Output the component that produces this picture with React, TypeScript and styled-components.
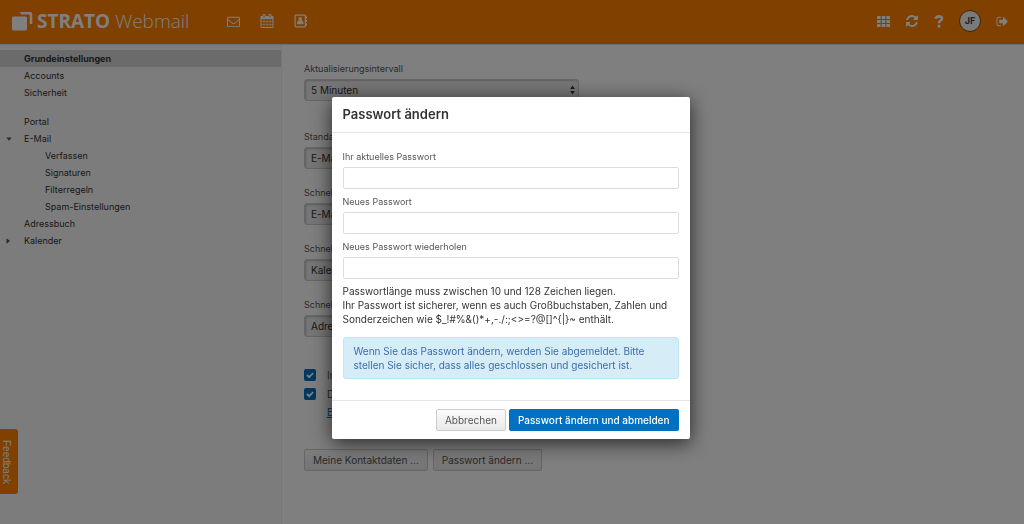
import React from "react";
import styled, { createGlobalStyle, css } from "styled-components";

const GlobalStyle = createGlobalStyle`
  *, *::before, *::after { box-sizing: border-box; }
  html, body { margin: 0; padding: 0; }
  body {
    font-family: Inter, "Liberation Sans", sans-serif;
    font-size: 10px;
    line-height: 14px;
    color: #333;
    background: #fff;
    overflow: hidden;
  }
  button, input, select { font: inherit; color: inherit; margin: 0; }
`;

const Page = styled.div`
  display: flex;
  flex-direction: column;
  height: 100vh;
`;

const Header = styled.header`
  display: flex;
  align-items: center;
  flex: none;
  height: 44px;
  padding: 0 15px 2px 12px;
  background: #ff8000;
  color: #fff;
`;

const Brand = styled.a`
  display: flex;
  align-items: center;
  gap: 4px;
  width: 215px;
  color: inherit;
  text-decoration: none;
  white-space: nowrap;
  font-family: "Open Sans", "Noto Sans", sans-serif;
  font-size: 19px;
  line-height: 24px;
`;

const BrandName = styled.strong`
  font-weight: 700;
`;

const BrandProduct = styled.span`
  font-weight: 300;
`;

const Toolbar = styled.nav<{ $gap: number; $end?: boolean }>`
  display: flex;
  align-items: center;
  gap: ${(p) => p.$gap}px;
  margin-left: ${(p) => (p.$end ? "auto" : "0")};
`;

const IconButton = styled.button`
  display: flex;
  align-items: center;
  justify-content: center;
  padding: 0;
  border: 0;
  background: none;
  color: #fff;
`;

const Avatar = styled.button`
  width: 22px;
  height: 22px;
  padding: 0;
  border: 1px solid #8a4a08;
  border-radius: 50%;
  background: #f4f4f4;
  color: #444;
  font-size: 9px;
  font-weight: 700;
  line-height: 20px;
  text-align: center;
`;

const Main = styled.div`
  display: flex;
  flex: 1;
  min-height: 0;
  border-top: 1px solid #ddd;
`;

const Sidebar = styled.nav`
  flex: none;
  width: 282px;
  padding-top: 5px;
  background: #f8f8f8;
  border-right: 1px solid #eee;
`;

const MenuList = styled.ul`
  margin: 0 0 12px;
  padding: 0;
  list-style: none;
`;

const MenuItem = styled.li<{ $active?: boolean }>`
  display: flex;
  align-items: center;
  height: 17px;
  background: ${(p) => (p.$active ? "#d6d6d6" : "transparent")};
  font-weight: ${(p) => (p.$active ? 700 : 400)};
`;

const MenuToggle = styled.span`
  display: flex;
  width: 24px;
  padding-left: 6px;
  color: #555;
`;

const MenuLink = styled.a<{ $nested?: boolean }>`
  padding-left: ${(p) => (p.$nested ? 21 : 0)}px;
  color: #333;
  font-size: 9px;
  text-decoration: none;
`;

const Content = styled.main`
  flex: 1;
  padding: 18px 22px;
  color: #555;
`;

const Field = styled.div<{ $gap: number }>`
  display: flex;
  flex-direction: column;
  gap: 4px;
  max-width: 275px;
  margin-bottom: ${(p) => p.$gap}px;
`;

const Label = styled.label`
  color: #555;
  font-size: 9px;
  line-height: 12px;
`;

const SelectWrap = styled.div`
  display: grid;
  align-items: center;
  color: #333;

  & > * { grid-area: 1 / 1; }
  & > svg { justify-self: end; margin-right: 4px; pointer-events: none; }
`;

const Select = styled.select`
  appearance: none;
  width: 100%;
  height: 22px;
  padding: 0 6px;
  border: 1px solid #ccc;
  border-radius: 3px;
  background: #ececec;
  box-shadow: inset 1px 1px 2px rgba(0, 0, 0, 0.2);
`;

const CheckRow = styled.div`
  display: flex;
  align-items: center;
  gap: 11px;
  height: 19px;
`;

const Checkbox = styled.input`
  appearance: none;
  width: 12px;
  height: 12px;
  border-radius: 2px;
  background: #0070c0
    url("data:image/svg+xml,%3Csvg xmlns='http://www.w3.org/2000/svg' viewBox='0 0 12 12'%3E%3Cpath d='M3 6l2.200 2.200L9.200 4' fill='none' stroke='white' stroke-width='1.800'/%3E%3C/svg%3E")
    center / 12px 12px;
`;

const HelpLink = styled.a`
  display: inline-block;
  margin: 2px 0 30px 23px;
  color: #0070c0;
`;

const ButtonRow = styled.div<{ $gap: number; $end?: boolean }>`
  display: flex;
  justify-content: ${(p) => (p.$end ? "flex-end" : "flex-start")};
  gap: ${(p) => p.$gap}px;
`;

const Button = styled.button<{ $primary?: boolean }>`
  height: 22px;
  padding: 0 8px;
  border: 1px solid #ccc;
  border-radius: 2px;
  background: linear-gradient(#fbfbfb, #e9e9e9);
  color: #555;
  line-height: 20px;
  white-space: nowrap;

  ${(p) =>
    p.$primary &&
    css`
      border-color: #0070c0;
      background: #0070c0;
      color: #fff;
      font-weight: 500;
    `}
`;

const Feedback = styled.button`
  position: fixed;
  left: 0;
  bottom: 30px;
  width: 18px;
  height: 65px;
  padding: 0 6px 0 0;
  border: 0;
  border-radius: 0 3px 3px 0;
  background: #ff8000;
  color: #fff;
  font-family: "Liberation Sans", sans-serif;
  font-size: 10px;
  line-height: 12px;
  writing-mode: vertical-rl;
`;

const Backdrop = styled.div`
  position: fixed;
  inset: 0;
  display: flex;
  justify-content: center;
  align-items: flex-start;
  padding: 97px 3px 0 0;
  background: rgba(0, 0, 0, 0.5);
`;

const Dialog = styled.form`
  width: 358px;
  border-radius: 2px;
  background: #fff;
  box-shadow: 0 4px 20px rgba(0, 0, 0, 0.7);
`;

const DialogHeader = styled.header`
  padding: 9px 11px;
  border-bottom: 1px solid #e5e5e5;
`;

const DialogTitle = styled.h1`
  margin: 0;
  font-size: 13px;
  font-weight: 600;
  line-height: 17px;
`;

const DialogBody = styled.div`
  padding: 18px 11px 21px;
`;

const PasswordList = styled.div`
  display: grid;
  gap: 7px;
`;

const PasswordField = styled.div`
  display: flex;
  flex-direction: column;
  gap: 4px;
`;

const TextInput = styled.input`
  width: 100%;
  height: 22px;
  padding: 0 6px;
  border: 1px solid #ddd;
  border-radius: 2px;
  background: #fff;
`;

const Hint = styled.p`
  margin: 5px 0 11px;
`;

const Notice = styled.p`
  margin: 0;
  padding: 6px 10px;
  border: 1px solid #bce8f1;
  border-radius: 3px;
  background: #d6edf8;
  color: #3a6ea8;
`;

const DialogFooter = styled.footer`
  padding: 8px 11px;
  border-top: 1px solid #e5e5e5;
`;

const Logo = () => (
  <svg width="21" height="19" viewBox="0 0 21 19" fill="currentColor" aria-hidden="true">
    <rect x="0" y="4.500" width="15" height="14" rx="1.500" />
    <path d="M7.500 0H18.300a2 2 0 0 1 2 2V12H17.700V3.800a1.200 1.200 0 0 0-1.200-1.200H9.200z" />
  </svg>
);

const MailIcon = () => (
  <svg width="13" height="13" viewBox="0 0 1792 1792" fill="currentColor">
    <path d="M1664 1504v-768q-32 36-69 66-268 206-426 338-51 43-83 67t-86.500 48.500-102.500 24.500h-2q-48 0-102.500-24.500t-86.500-48.500-83-67q-158-132-426-338-37-30-69-66v768q0 13 9.500 22.500t22.500 9.500h1472q13 0 22.500-9.500t9.500-22.500zm0-1051v-24.500l-.5-13-3-12.500-5.500-9-9-7.500-14-2.500h-1472q-13 0-22.500 9.500t-9.500 22.500q0 168 147 284 193 152 401 317 6 5 35 29.500t46 37.500 44.500 31.500 50.500 27.500 43 9h2q20 0 43-9t50.500-27.500 44.500-31.500 46-37.500 35-29.500q208-165 401-317 54-43 100.500-115.500t46.500-131.500zm128-37v1088q0 66-47 113t-113 47h-1472q-66 0-113-47t-47-113v-1088q0-66 47-113t113-47h1472q66 0 113 47t47 113z" />
  </svg>
);

const CalendarIcon = () => (
  <svg width="14" height="14" viewBox="0 0 1792 1792" fill="currentColor">
    <path d="M192 1664h288v-288h-288v288zm352 0h320v-288h-320v288zm-352-352h288v-320h-288v320zm352 0h320v-320h-320v320zm-352-384h288v-288h-288v288zm736 736h320v-288h-320v288zm-384-736h320v-288h-320v288zm768 736h288v-288h-288v288zm-384-352h320v-320h-320v320zm-352-864v-288q0-13-9.500-22.500t-22.500-9.500h-64q-13 0-22.500 9.500t-9.500 22.500v288q0 13 9.500 22.500t22.500 9.500h64q13 0 22.500-9.500t9.500-22.500zm736 864h288v-320h-288v320zm-384-384h320v-288h-320v288zm384 0h288v-288h-288v288zm32-480v-288q0-13-9.500-22.500t-22.500-9.500h-64q-13 0-22.500 9.500t-9.500 22.500v288q0 13 9.500 22.500t22.500 9.500h64q13 0 22.500-9.500t9.500-22.500zm384-64v1280q0 52-38 90t-90 38h-1408q-52 0-90-38t-38-90v-1280q0-52 38-90t90-38h128v-96q0-66 47-113t113-47h64q66 0 113 47t47 113v96h384v-96q0-66 47-113t113-47h64q66 0 113 47t47 113v96h128q52 0 90 38t38 90z" />
  </svg>
);

const ContactsIcon = () => (
  <svg width="14" height="14" viewBox="0 0 14 14" fill="currentColor">
    <rect x="1.100" y="1.100" width="10.300" height="11.800" rx="1" fill="none" stroke="currentColor" strokeWidth="1.200" />
    <circle cx="6.250" cy="5" r="1.900" />
    <path d="M3 10.300V9Q3 7 4.600 6.600Q6.250 7.900 7.900 6.600Q9.500 7 9.500 9V10.300z" />
    <path d="M12 2.500h1v2h-1zM12 6h1v2h-1zM12 9.500h1v2h-1z" />
  </svg>
);

const GridIcon = () => (
  <svg width="13" height="11" viewBox="0 0 13 11" fill="currentColor">
    {[0, 4, 8].map((y) =>
      [0, 4.7, 9.4].map((x) => <rect key={`${x}-${y}`} x={x} y={y} width="3.600" height="3" rx="0.500" />)
    )}
  </svg>
);

const RefreshIcon = () => (
  <svg width="14" height="14" viewBox="0 0 1792 1792" fill="currentColor">
    <path d="M1639 1056q0 5-1 7-64 268-268 434.500t-478 166.500q-146 0-282.500-55t-243.500-157l-129 129q-19 19-45 19t-45-19-19-45v-448q0-26 19-45t45-19h448q26 0 45 19t19 45-19 45l-137 137q71 66 161 102t187 36q134 0 250-65t186-179q11-17 53-117 8-23 30-23h192q13 0 22.500 9.500t9.500 22.500zm25-800v448q0 26-19 45t-45 19h-448q-26 0-45-19t-19-45 19-45l138-138q-148-137-349-137-134 0-250 65t-186 179q-11 17-53 117-8 23-30 23h-199q-13 0-22.500-9.500t-9.500-22.500v-7q65-268 270-434.500t480-166.500q146 0 284 55.500t245 156.500l130-129q19-19 45-19t45 19 19 45z" />
  </svg>
);

const HelpIcon = () => (
  <svg width="10" height="14" viewBox="0 0 10 14">
    <path d="M1.600 4.800Q2.100 2.200 4.900 2.200Q8 2.300 8 4.500Q8 5.800 6.500 6.600Q5 7.400 5 9.200" fill="none" stroke="currentColor" strokeWidth="2.500" />
    <rect x="3.600" y="10.700" width="2.800" height="2.700" rx="0.400" fill="currentColor" />
  </svg>
);

const SignOutIcon = () => (
  <svg width="13" height="13" viewBox="0 0 1792 1792" fill="currentColor">
    <path d="M704 1440q0 4 1 20t.5 26.500-3 23.500-10 19.500-20.500 6.500h-320q-119 0-203.500-84.500t-84.500-203.500v-704q0-119 84.500-203.500t203.500-84.500h320q13 0 22.500 9.500t9.500 22.500q0 4 1 20t.5 26.500-3 23.500-10 19.500-20.500 6.500h-320q-66 0-113 47t-47 113v704q0 66 47 113t113 47h312l11.500 1 11.500 3 8 5.500 7 9 2 13.500zm928-544q0 26-19 45l-544 544q-19 19-45 19t-45-19-19-45v-288h-448q-26 0-45-19t-19-45v-384q0-26 19-45t45-19h448v-288q0-26 19-45t45-19 45 19l544 544q19 19 19 45z" />
  </svg>
);

const Caret = ({ open }: { open: boolean }) => (
  <svg width="6" height="6" viewBox="0 0 6 6" fill="currentColor" aria-hidden="true">
    <path d={open ? "M0.300 1.500H5.700L3 4.800z" : "M0.500 0.200V5.800L4 3z"} />
  </svg>
);

const UpDown = () => (
  <svg width="5" height="10" viewBox="0 0 5 10" fill="currentColor" aria-hidden="true">
    <path d="M0.200 4L2.500 0.500L4.800 4zM0.200 6L2.500 9.500L4.800 6z" />
  </svg>
);

type Entry = { text: string; active?: boolean; nested?: boolean; open?: boolean };

const menu: Entry[][] = [
  [{ text: "Grundeinstellungen", active: true }, { text: "Accounts" }, { text: "Sicherheit" }],
  [
    { text: "Portal" },
    { text: "E-Mail", open: true },
    { text: "Verfassen", nested: true },
    { text: "Signaturen", nested: true },
    { text: "Filterregeln", nested: true },
    { text: "Spam-Einstellungen", nested: true },
    { text: "Adressbuch" },
    { text: "Kalender", open: false },
  ],
];

const settings = [
  { id: "interval", label: "Aktualisierungsintervall", value: "5 Minuten", gap: 30 },
  { id: "start", label: "Standardanwendung", value: "E-Mail", gap: 18 },
  { id: "quick1", label: "Schnellstart 1", value: "E-Mail", gap: 18 },
  { id: "quick2", label: "Schnellstart 2", value: "Kalender", gap: 18 },
  { id: "quick3", label: "Schnellstart 3", value: "Adressbuch", gap: 28 },
];

const passwords = [
  { id: "current", label: "Ihr aktuelles Passwort" },
  { id: "new", label: "Neues Passwort" },
  { id: "repeat", label: "Neues Passwort wiederholen" },
];

export default function App() {
  return (
    <>
      <GlobalStyle />
      <Page>
        <Header>
          <Brand href="#">
            <Logo />
            <span>
              <BrandName>STRATO</BrandName> <BrandProduct>Webmail</BrandProduct>
            </span>
          </Brand>
          <Toolbar $gap={20} aria-label="Anwendungen">
            <IconButton aria-label="E-Mail"><MailIcon /></IconButton>
            <IconButton aria-label="Kalender"><CalendarIcon /></IconButton>
            <IconButton aria-label="Adressbuch"><ContactsIcon /></IconButton>
          </Toolbar>
          <Toolbar $gap={15} $end aria-label="Konto">
            <IconButton aria-label="Apps"><GridIcon /></IconButton>
            <IconButton aria-label="Aktualisieren"><RefreshIcon /></IconButton>
            <IconButton aria-label="Hilfe"><HelpIcon /></IconButton>
            <Avatar>JF</Avatar>
            <IconButton aria-label="Abmelden"><SignOutIcon /></IconButton>
          </Toolbar>
        </Header>
        <Main>
          <Sidebar aria-label="Einstellungen">
            {menu.map((group, i) => (
              <MenuList key={i}>
                {group.map((e) => (
                  <MenuItem key={e.text} $active={e.active}>
                    <MenuToggle>{e.open !== undefined && <Caret open={e.open} />}</MenuToggle>
                    <MenuLink href="#" $nested={e.nested}>{e.text}</MenuLink>
                  </MenuItem>
                ))}
              </MenuList>
            ))}
          </Sidebar>
          <Content>
            {settings.map((s) => (
              <Field key={s.id} $gap={s.gap}>
                <Label htmlFor={s.id}>{s.label}</Label>
                <SelectWrap>
                  <Select id={s.id}>
                    <option>{s.value}</option>
                  </Select>
                  <UpDown />
                </SelectWrap>
              </Field>
            ))}
            <CheckRow>
              <Checkbox type="checkbox" id="check1" defaultChecked />
              <label htmlFor="check1">Im Hintergrund laden</label>
            </CheckRow>
            <CheckRow>
              <Checkbox type="checkbox" id="check2" defaultChecked />
              <label htmlFor="check2">Desktop-Hinweise</label>
            </CheckRow>
            <HelpLink href="#">Einstellungen</HelpLink>
            <ButtonRow $gap={5}>
              <Button>Meine Kontaktdaten ...</Button>
              <Button>Passwort ändern ...</Button>
            </ButtonRow>
          </Content>
        </Main>
        <Feedback>Feedback</Feedback>
      </Page>
      <Backdrop>
        <Dialog role="dialog" aria-modal="true" aria-labelledby="dialog-title">
          <DialogHeader>
            <DialogTitle id="dialog-title">Passwort ändern</DialogTitle>
          </DialogHeader>
          <DialogBody>
            <PasswordList>
              {passwords.map((p) => (
                <PasswordField key={p.id}>
                  <Label htmlFor={p.id}>{p.label}</Label>
                  <TextInput type="password" id={p.id} />
                </PasswordField>
              ))}
            </PasswordList>
            <Hint>
              Passwortlänge muss zwischen 10 und 128 Zeichen liegen.
              <br />
              {"Ihr Passwort ist sicherer, wenn es auch Großbuchstaben, Zahlen und Sonderzeichen wie $_!#%&()*+,-./:;<>=?@[]^{|}~ enthält."}
            </Hint>
            <Notice>
              Wenn Sie das Passwort ändern, werden Sie abgemeldet. Bitte stellen Sie sicher, dass alles geschlossen
              und gesichert ist.
            </Notice>
          </DialogBody>
          <DialogFooter>
            <ButtonRow $gap={3} $end>
              <Button type="button">Abbrechen</Button>
              <Button type="button" $primary>Passwort ändern und abmelden</Button>
            </ButtonRow>
          </DialogFooter>
        </Dialog>
      </Backdrop>
    </>
  );
}
